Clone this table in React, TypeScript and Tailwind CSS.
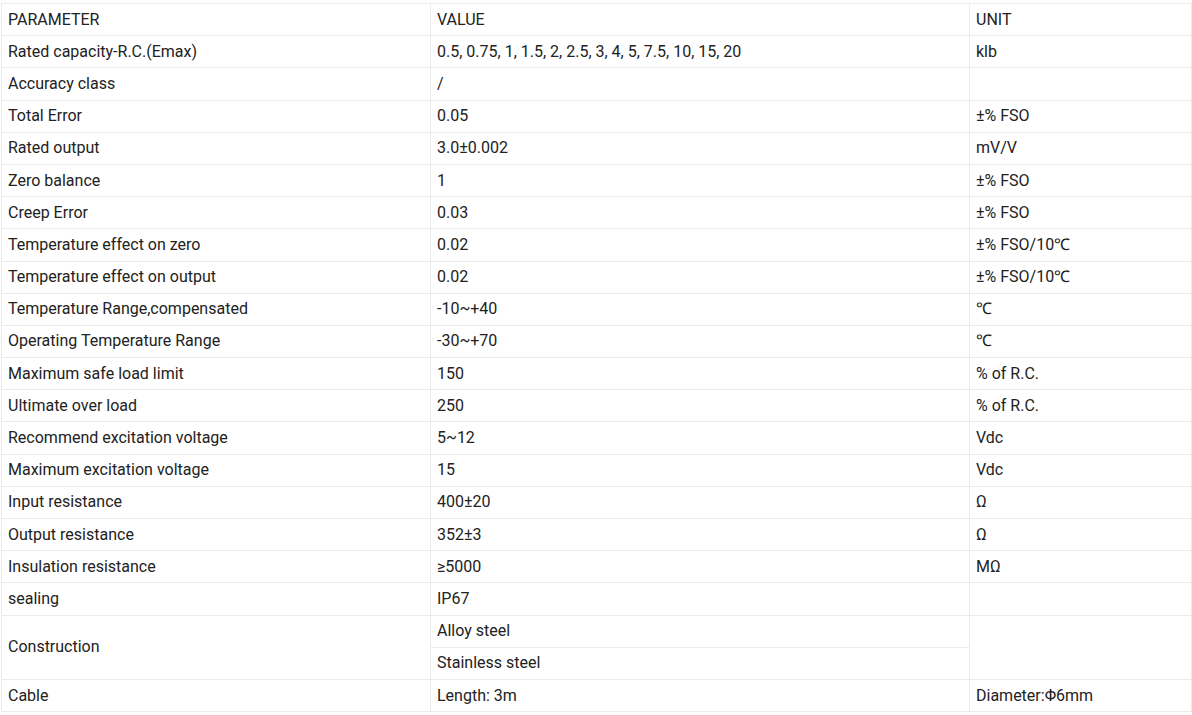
const rows: [string, string, string][] = [
  ['Rated capacity-R.C.(Emax)', '0.5, 0.75, 1, 1.5, 2, 2.5, 3, 4, 5, 7.5, 10, 15, 20', 'klb'],
  ['Accuracy class', '/', ''],
  ['Total Error', '0.05', '±% FSO'],
  ['Rated output', '3.0±0.002', 'mV/V'],
  ['Zero balance', '1', '±% FSO'],
  ['Creep Error', '0.03', '±% FSO'],
  ['Temperature effect on zero', '0.02', '±% FSO/10℃'],
  ['Temperature effect on output', '0.02', '±% FSO/10℃'],
  ['Temperature Range,compensated', '-10~+40', '℃'],
  ['Operating Temperature Range', '-30~+70', '℃'],
  ['Maximum safe load limit', '150', '% of R.C.'],
  ['Ultimate over load', '250', '% of R.C.'],
  ['Recommend excitation voltage', '5~12', 'Vdc'],
  ['Maximum excitation voltage', '15', 'Vdc'],
  ['Input resistance', '400±20', 'Ω'],
  ['Output resistance', '352±3', 'Ω'],
  ['Insulation resistance', '≥5000', 'MΩ'],
  ['sealing', 'IP67', ''],
];

const cell = 'border border-[#ebebeb] h-[32.2px] px-[6px] py-0 text-left font-normal align-middle';

export default function App() {
  return (
    <div className="bg-white pt-[3px] pl-[1px] text-[16px] text-[#222] leading-[20px]" style={{ fontFamily: 'Roboto, "Liberation Sans", sans-serif' }}>
      <table className="border-collapse w-[1190px] table-fixed">
        <colgroup>
          <col className="w-[429px]" />
          <col className="w-[539px]" />
          <col className="w-[222px]" />
        </colgroup>
        <thead>
          <tr>
            <th className={cell}>PARAMETER</th>
            <th className={cell}>VALUE</th>
            <th className={cell}>UNIT</th>
          </tr>
        </thead>
        <tbody>
          {rows.map(([p, v, u]) => (
            <tr key={p}>
              <td className={cell}>{p}</td>
              <td className={cell}>{v}</td>
              <td className={cell}>{u}</td>
            </tr>
          ))}
          <tr>
            <td className={cell} rowSpan={2}>Construction</td>
            <td className={cell}>Alloy steel</td>
            <td className={cell} rowSpan={2}></td>
          </tr>
          <tr>
            <td className={cell}>Stainless steel</td>
          </tr>
          <tr>
            <td className={cell}>Cable</td>
            <td className={cell}>Length: 3m</td>
            <td className={cell}>Diameter:Φ6mm</td>
          </tr>
        </tbody>
      </table>
    </div>
  );
}
